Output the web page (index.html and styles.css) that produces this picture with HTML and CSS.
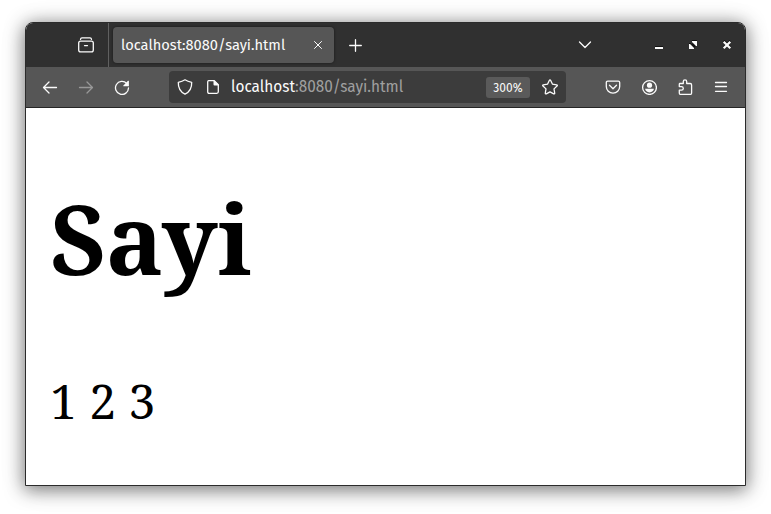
FILE: index.html
```html
<!DOCTYPE html>
<html lang="en">
<head>
<meta charset="utf-8">
<title>localhost:8080/sayi.html</title>
<link rel="stylesheet" href="styles.css">
</head>
<body>
<div class="window">
  <header class="tabbar">
    <div class="view">
      <svg class="icon" viewBox="0 0 16 16"><path d="M2.600 4.200h10.800q1.900 0 1.900 1.900v6.900q0 1.900-1.900 1.900H2.600Q.7 14.900.7 13V6.100Q.7 4.200 2.600 4.200ZM6.500 8.600h3"/><path d="M2.500 2.300Q2.700.8 4 .8h8q1.300 0 1.500 1.500"/></svg>
    </div>
    <div class="tab">
      <span class="tab-title"><span class="fit">localhost:8080/sayi.html</span></span>
      <svg class="icon thin" viewBox="0 0 16 16"><path d="M4.500 4.500l7 7M11.500 4.500l-7 7"/></svg>
    </div>
    <svg class="icon new-tab" viewBox="0 0 16 16"><path d="M8.500 2.700v11.600M2.700 8.500h11.600"/></svg>
    <svg class="icon list-tabs" viewBox="0 0 16 16"><path d="M2.500 5l5.500 5.500L13.500 5"/></svg>
    <div class="controls">
      <svg class="icon" viewBox="0 0 16 16"><path class="shade" d="M4 9h8v1H4z"/><path class="solid" d="M4 10h8v2H4z"/></svg>
      <svg class="icon" viewBox="0 0 16 16"><path class="shade" d="M7 3h5v1H7zM4 6h2v1H4zM6 7l3-1 2 3-2 2z"/><path class="solid" d="M7 4h5v5h-1L7 5zM4 7h1l4 4v1H4z"/></svg>
      <svg class="icon close" viewBox="0 0 16 16"><path class="close-shade" d="M4.700 3.700l6.600 6.600M11.300 3.700l-6.600 6.600"/><path d="M4.700 4.700l6.600 6.600M11.300 4.700l-6.600 6.600"/></svg>
    </div>
  </header>
  <nav class="toolbar">
    <div class="nav-buttons">
      <svg class="icon" viewBox="0 0 16 16"><path d="M14.500 8.500H1.700M7 3L1.500 8.500 7 14"/></svg>
      <svg class="icon disabled" viewBox="0 0 16 16"><path d="M1.500 8.500h12.800M9 3l5.500 5.500L9 14"/></svg>
      <svg class="icon" viewBox="0 0 16 16"><path d="M12.700 4.400A6.500 6.500 0 1 0 14.500 9"/><path class="solid" d="M14.900 2.100v5.200H9.600q-.8-.3-.2-.9L14 1.800q.6-.4.900.3z"/></svg>
    </div>
    <div class="urlbar">
      <svg class="icon" viewBox="0 0 16 16"><path d="M8 .8c2 1.400 4.200 2.100 6.700 2.500.2 5.300-2.100 9.700-6.700 11.900C3.400 13 1.100 8.600 1.300 3.300 3.800 2.900 6 2.200 8 .8z"/></svg>
      <svg class="icon doc" viewBox="0 0 16 16"><path d="M3.700 1.700h5.500l4.100 4.100v7q0 1.500-1.500 1.500H4.200q-1.500 0-1.500-1.500V3.200q0-1.500 1-1.500z"/><path class="solid" d="M8.500 1.500h1l4 4v1h-4q-1 0-1-1z"/></svg>
      <span class="address"><span class="fit-url"><span class="host">localhost</span>:8080/sayi.html</span></span>
      <span class="zoom">300%</span>
      <svg class="icon star" viewBox="0 0 16 16"><path d="M8 .9q.4 0 .7.600l1.800 3.700 4.100.6q1.200.3.400 1.200l-3 2.900.7 4.100q.1 1.200-1 .8L8 12.900l-3.700 1.900q-1.100.4-1-.8l.7-4.100L1 7q-.8-.9.4-1.200l4.100-.6 1.800-3.700Q7.600.9 8 .9z"/></svg>
    </div>
    <div class="actions">
      <svg class="icon" viewBox="0 0 16 16"><path d="M2.700 2.200h10.600q1.400 0 1.400 1.400v3.900a6.700 6.700 0 0 1-13.400 0V3.600q0-1.400 1.400-1.400zM4.500 6.300L8 9.700l3.500-3.400"/></svg>
      <svg class="icon" viewBox="0 0 16 16"><circle cx="8.500" cy="8.500" r="6.900"/><circle class="solid" cx="8.500" cy="6.200" r="2.600"/><path class="solid" d="M4.100 9.800h8.800c-.2 2.100-2 3.600-4.400 3.600S4.300 11.900 4.100 9.800z"/></svg>
      <svg class="icon" viewBox="0 0 16 16"><path d="M3 4.500h3.300V2.600a1.700 1.700 0 0 1 3.400 0v1.900h3.500q1.400 0 1.400 1.400v8q0 1.500-1.500 1.500H3.700q-1.400 0-1.400-1.500v-2.700h2.200a1.800 1.800 0 0 0 0-3.600H2.300V5.200q0-.7.700-.7z"/></svg>
      <svg class="icon" viewBox="0 0 16 16"><path d="M2.500 3.500h11M2.500 7.500h11M2.500 12.300h11"/></svg>
    </div>
  </nav>
  <main class="page">
    <h1>Sayi</h1>
    <p>1 2 3</p>
  </main>
</div>
</body>
</html>
```

FILE: styles.css
```css
* { box-sizing: border-box; }
body {
  margin: 0;
  padding: 22px 25px 28px;
  height: 514px;
  overflow: hidden;
  background: #fff;
  font-family: "Fira Sans", "Noto Sans", sans-serif;
}
.window {
  height: 464px;
  border: 1px solid #2b2b2b;
  border-radius: 8px 8px 0 0;
  background: #fff;
  box-shadow: 0 3px 18px 1px rgba(0,0,0,.5), 0 2px 30px rgba(0,0,0,.08);
}
.icon {
  display: block;
  flex: none;
  width: 16px;
  height: 16px;
  fill: none;
  stroke: #fbfbfb;
  stroke-width: 1.3;
  stroke-linecap: round;
  stroke-linejoin: round;
}
.solid { fill: #fbfbfb; stroke: none; }
.shade { fill: #111; stroke: none; }
.tabbar {
  display: flex;
  align-items: center;
  height: 44px;
  background: #303030;
  border-radius: 7px 7px 0 0;
}
.view {
  display: flex;
  align-items: center;
  justify-content: flex-end;
  width: 83px;
  height: 44px;
  padding-right: 14px;
  border-right: 1px solid #606060;
}
.tab {
  display: flex;
  align-items: center;
  width: 221px;
  height: 36px;
  margin-left: 4px;
  padding: 0 8px;
  border-radius: 4px;
  background: #565656;
  box-shadow: 0 0 3px rgba(0,0,0,.5);
}
.tab-title { flex: 1; color: #fbfbfb; font-size: 15px; line-height: 20px; white-space: nowrap; }
.fit, .fit-url { display: inline-block; transform-origin: 0 50%; }
.fit { transform: scaleX(.976); }
.fit-url { transform: scaleX(.96); }
.thin { stroke-width: 1; }
.new-tab { margin-left: 13px; }
.list-tabs { margin-left: auto; }
.controls { display: flex; gap: 18px; margin: 0 10px 0 58px; }
.close { stroke-width: 2.2; stroke-linecap: butt; }
.close-shade { stroke: #111; }
.toolbar {
  display: flex;
  align-items: center;
  height: 41px;
  padding: 0 16px;
  background: #565656;
  border-bottom: 1px solid #252525;
}
.nav-buttons, .actions { display: flex; gap: 20px; }
.disabled { opacity: .4; }
.urlbar {
  display: flex;
  align-items: center;
  width: 397px;
  height: 32px;
  margin: 0 auto 0 39px;
  padding: 0 8px;
  border-radius: 4px;
  background: #3c3c3c;
}
.doc { margin: 0 10px 0 12px; }
.address { flex: 1; color: #a0a0a0; font-size: 16px; line-height: 22px; white-space: nowrap; }
.host { color: #fbfbfb; }
.zoom {
  width: 44px;
  height: 21px;
  margin-right: 12px;
  border-radius: 3px;
  background: #5a5a5a;
  color: #fbfbfb;
  font-size: 12px;
  line-height: 22px;
  text-align: center;
}
.page { padding: 0 24px; font-family: "Noto Serif", "DejaVu Serif Condensed", "DejaVu Serif", serif; color: #000; }
h1 { margin: 64px 0 0; font-size: 96.5px; line-height: 131px; font-weight: 700; }
p { margin: 65px 0 0; font-size: 48px; line-height: 65px; }
```
